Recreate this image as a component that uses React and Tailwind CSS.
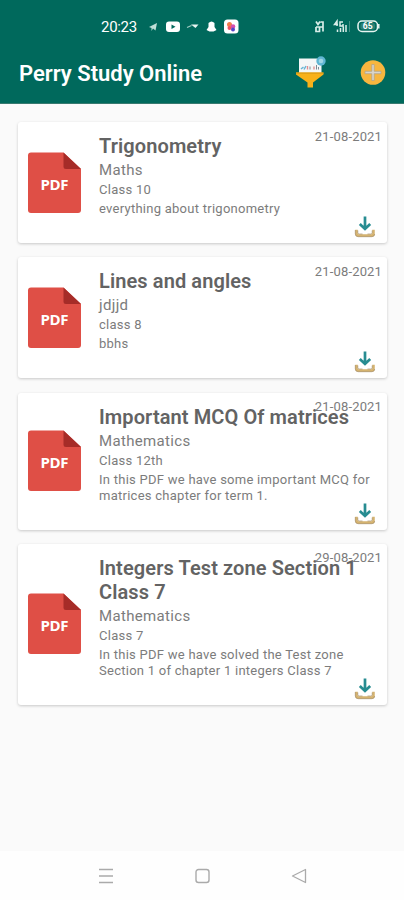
const cards = [
  { title: ['Trigonometry'], subject: 'Maths', level: 'Class 10', text: ['everything about trigonometry'], date: '21-08-2021', height: 'h-[121px]' },
  { title: ['Lines and angles'], subject: 'jdjjd', level: 'class 8', text: ['bbhs'], date: '21-08-2021', height: 'h-[121px]' },
  { title: ['Important MCQ Of matrices'], subject: 'Mathematics', level: 'Class 12th', text: ['In this PDF we have some important MCQ for', 'matrices chapter for term 1.'], date: '21-08-2021', height: 'h-[137px]' },
  { title: ['Integers Test zone Section 1', 'Class 7'], subject: 'Mathematics', level: 'Class 7', text: ['In this PDF we have solved the Test zone', 'Section 1 of chapter 1 integers Class 7'], date: '29-08-2021', height: 'h-[161px]' },
];

function PdfIcon() {
  return (
    <svg width="54" height="62" viewBox="0 0 54 62" className="block shrink-0">
      <path d="M4 .5H36.500L54 17V58Q54 61 51 61H4Q1 61 1 58V3.500Q1 .5 4 .5Z" fill="#df4f46" />
      <path d="M36.500 .5L54 17H39Q36.500 17 36.500 14.500Z" fill="#a62c28" />
      <text x="27.500" y="37.500" textAnchor="middle" textLength="28" fontSize="15" fontWeight="700" fill="#fff" fontFamily="Open Sans, sans-serif">PDF</text>
    </svg>
  );
}

function DownloadIcon() {
  return (
    <svg width="22" height="22" viewBox="0 0 22 22" fill="none">
      <path d="M11 .5V12M5.800 8L11 13L16.200 8" stroke="#278c91" strokeWidth="2.700" />
      <path d="M2.500 13.800V17.500Q2.500 19.500 4.500 19.500H17.500Q19.500 19.500 19.500 17.500V13.800" stroke="#d5b36f" strokeWidth="2.500" />
      <path d="M3.800 14.500V16.500Q3.800 18 5.500 18H8.500M13.500 18H16.500Q18.200 18 18.200 16.500V14.500M1.300 14V18Q1.300 20.700 4 20.700H18Q20.700 20.700 20.700 18" stroke="#9a825b" strokeWidth=".6" />
    </svg>
  );
}

function StatusBar() {
  return (
    <div className="flex h-[42px] items-start text-white">
      <span className="ml-[101px] mt-[17px] w-[36px] whitespace-nowrap text-[15px] leading-[20px] tracking-[-0.3px]">20:23</span>
      <svg className="ml-[11px] mt-[18px]" width="92" height="18" viewBox="148 18 92 18">
        <path d="M149 27L157 23L155.500 30.500L153 28.500L151.500 31V28Z" fill="#bfe0d8" />
        <rect x="166" y="21.500" width="14" height="10.500" rx="3" fill="#fff" />
        <path d="M171.500 24.500V29L175.500 26.700Z" fill="#00695c" />
        <path d="M187 27.500L191.500 25.500" stroke="#9fccc3" strokeWidth="1.300" />
        <path d="M191 24.500H198.500L195.500 28Z" fill="#e7f5f1" />
        <path d="M208.500 23Q211.500 20 214.500 23V27L216.500 30L213.500 31.500H209.500L206.500 30L208.500 27Z" fill="#fff" />
        <rect x="224" y="19.500" width="14.500" height="14" rx="3.500" fill="#fff" />
        <circle cx="229.500" cy="24.500" r="2.500" fill="#f17c4b" />
        <circle cx="233" cy="26.500" r="2.300" fill="#d64fae" />
        <circle cx="229.500" cy="28" r="2" fill="#ef5261" />
        <circle cx="233" cy="29.500" r="2" fill="#5446c7" />
      </svg>
      <svg className="ml-[74px] mt-[18px]" width="68" height="18" viewBox="314 18 68 18" fill="none">
        <path d="M316 21.500L318 24.500L320 21.500M320.500 22H323V31.500M316 27H319.500V31.500H316V27M319.500 27H323" stroke="#d9eee9" strokeWidth="1.700" />
        <path d="M337 26V21L334.500 24.500H338M343 22H340V26H343V24M337.500 29.500V32M340.500 28V32M343.300 26.500V32M346 25V32" stroke="#d9eee9" strokeWidth="1.500" />
        <path d="M349.500 21V32" stroke="#5b9f93" strokeWidth=".7" />
        <rect x="358" y="21" width="19.500" height="10.500" rx="4" stroke="#e7f5f1" strokeWidth="1.500" />
        <path d="M378.800 24V28.500" stroke="#e7f5f1" strokeWidth="1.500" />
        <rect x="360.500" y="23" width="14.500" height="6.500" rx="2" fill="#2c8174" />
        <text x="367.700" y="29.300" textAnchor="middle" fontSize="8.500" fontWeight="700" fill="#fff">65</text>
      </svg>
    </div>
  );
}

function FilterIcon() {
  return (
    <svg width="32" height="34" viewBox="0 0 32 34">
      <path d="M3 2.500H21L25.500 9V19H3Z" fill="#f4f7f7" />
      <path d="M5 13L7.500 11M8 13.500L10 10" stroke="#67b4d5" strokeWidth="1.500" />
      <path d="M11.500 10V13.500M18 10.500V13.500" stroke="#e28c8c" strokeWidth="1.300" />
      <path d="M14 10.500V13.500M20.500 9V13.500M22.500 11V13.500" stroke="#7c8b95" strokeWidth="1" />
      <circle cx="25" cy="5" r="4.700" fill="#60b6d3" />
      <circle cx="25" cy="5" r="2.300" fill="#9fd5e4" />
      <path d="M0 16.500H27.500V18.500L17 26.500V31.500H11.500V26.500L0 18.500Z" fill="#f8b11a" />
      <path d="M0 16.500H27.500V17.700H0Z" fill="#d89b18" />
    </svg>
  );
}

function AddIcon() {
  return (
    <svg width="28" height="28" viewBox="0 0 28 28">
      <circle cx="14" cy="13.500" r="12.300" fill="#f7b63f" />
      <path d="M12.800 5.500H15.200V12.300H22V14.700H15.200V21.500H12.800V14.700H6V12.300H12.800Z" fill="#d9d5cc" stroke="#aaa08a" strokeWidth=".7" />
    </svg>
  );
}

function Card({ card }) {
  return (
    <article className={`${card.height} relative flex items-center rounded-[3px] bg-white pl-[9px] shadow-[0_1px_3px_rgba(0,0,0,0.2)]`}>
      <PdfIcon />
      <div className="ml-[18px] self-start whitespace-nowrap pt-[12px] text-[#7c7c7c]">
        <h2 className="text-[20px] font-semibold leading-[24px] tracking-[0.1px] text-[#636363]">
          {card.title.map((line) => <span key={line} className="block">{line}</span>)}
        </h2>
        <p className="mt-[2px] text-[15px] leading-[20px] tracking-[0.33px]">{card.subject}</p>
        <p className="mt-[2px] text-[13px] leading-[16px] tracking-[0.26px]">{card.level}</p>
        <div className="mt-[3px] text-[13px] leading-[16px] tracking-[0.26px]">
          {card.text.map((line) => <p key={line}>{line}</p>)}
        </div>
      </div>
      <time className="absolute right-[5px] top-[5.500px] text-[13px] leading-[18px] tracking-[0.15px] text-[#7c7c7c]">{card.date}</time>
      <span className="absolute bottom-[5px] right-[11px]"><DownloadIcon /></span>
    </article>
  );
}

export default function App() {
  return (
    <div className="flex h-[900px] w-[404px] flex-col overflow-hidden bg-[#fafafa] font-['Roboto',sans-serif]">
      <header className="h-[104px] shrink-0 border-b border-[#38796f] bg-[#00695c]">
        <StatusBar />
        <div className="flex h-[61px] items-center">
          <h1 className="ml-[19px] w-[277px] whitespace-nowrap text-[22px] font-semibold leading-[30px] text-white pt-[2px]">Perry Study Online</h1>
          <FilterIcon />
          <span className="ml-[31px]"><AddIcon /></span>
        </div>
      </header>
      <main className="flex flex-1 flex-col gap-[14.33px] pl-[18px] pr-[17px] pt-[18px]">
        {cards.map((card) => <Card key={card.title[0]} card={card} />)}
      </main>
      <nav className="flex h-[49px] shrink-0 items-center bg-[#fefefe]">
        <svg className="ml-[98px]" width="16" height="16" viewBox="0 0 16 16" stroke="#aaa" strokeWidth="1.300"><path d="M1 1.500H15M1 8H15M1 14.500H15" /></svg>
        <svg className="ml-[80px]" width="17" height="16" viewBox="0 0 17 16" fill="none" stroke="#aaa" strokeWidth="1.400"><rect x="2" y="1.500" width="13" height="13" rx="2.500" /></svg>
        <svg className="ml-[80px]" width="16" height="16" viewBox="0 0 16 16" fill="none" stroke="#aaa" strokeWidth="1.300" strokeLinejoin="round"><path d="M14.500 1.500V14.500L1.500 8Z" /></svg>
      </nav>
    </div>
  );
}
